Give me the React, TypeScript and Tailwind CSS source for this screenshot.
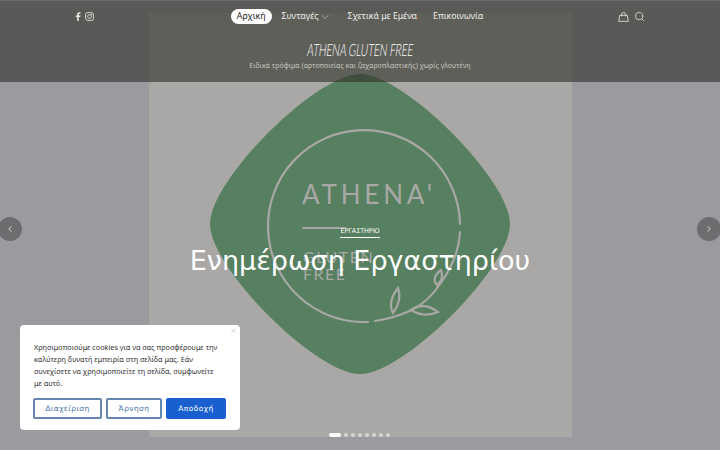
import React from "react";
import { ChevronDown, ChevronLeft, ChevronRight, Search, X } from "lucide-react";

const sans = "font-['DejaVu_Sans','Noto_Sans',sans-serif]";
const noto = "font-['Noto_Sans','DejaVu_Sans',sans-serif]";

function Logo() {
  return (
    <svg viewBox="0 0 423 424" className="h-full w-full" fill="none">
      <path d="M361 211C361 255 255 361 211 361C167 361 61 255 61 211C61 167 167 61 211 61C255 61 361 167 361 211Z" fill="#56805f" />
      <g stroke="#a9a8a6" strokeWidth="2.2" strokeLinecap="round">
        <path d="M311 211 A96 96 0 1 0 219 309" />
        <path d="M226 308 C240 306 252 302 263 297 C274 291 284 282 291 271 C302 256 310 238 311 219" />
        <path d="M249 275 C242 284 240 292 244 300 C250 292 252 283 249 275 Z" />
        <path d="M262 297 C270 291 280 292 289 299 C280 303 270 302 262 297 Z" />
        <path d="M292 257 C285 262 284 268 288 272 C293 268 294 262 292 257 Z" />
        <path d="M154 215 H196" />
      </g>
      <g fill="#a9a8a6" fontFamily="'Lato','Noto Sans',sans-serif">
        <text x="153" y="191" fontSize="26" letterSpacing="3.800">ATHENA'</text>
        <text x="154" y="250" fontSize="16" letterSpacing="1.500">GLUTEN</text>
        <text x="154" y="267" fontSize="16" letterSpacing="1.500">FREE</text>
      </g>
    </svg>
  );
}

function Facebook() {
  return (
    <svg viewBox="0 0 10 16" className="h-[9px] w-[6px]" fill="#e8e8e4">
      <path d="M6.4 16V9h2.5l.4-2.8H6.4V4.500c0-.8.3-1.400 1.400-1.400h1.600V.6C9.100.5 8.200.4 7.200.4 5 .4 3.500 1.700 3.500 4.100v2.100H1V9h2.500v7z" />
    </svg>
  );
}

function Instagram() {
  return (
    <svg viewBox="0 0 16 16" className="h-[9px] w-[9px]" fill="none" stroke="#e8e8e4" strokeWidth="1.500">
      <rect x="1" y="1" width="14" height="14" rx="4" />
      <circle cx="8" cy="8" r="3.300" />
      <circle cx="12" cy="4" r=".6" fill="#e8e8e4" />
    </svg>
  );
}

function Bag() {
  return (
    <svg viewBox="0 0 16 14" className="h-[10px] w-[11px]" fill="none" stroke="#e8e8e4" strokeWidth="1.200">
      <path d="M2.500 4.500H13.500L15 13.300H1Z" />
      <path d="M5.200 6V3.200a2.800 2.800 0 0 1 5.600 0V6" />
    </svg>
  );
}

export default function App() {
  return (
    <div className={`relative flex h-[450px] w-[720px] items-center justify-center overflow-hidden bg-[#9a9b9f] ${sans}`}>
      <div className="h-[424px] w-[423px] bg-[#a9a8a6]">
        <Logo />
      </div>

      <header className="absolute inset-x-0 top-0 h-[82px] border-t border-white/10 bg-[#2e2f28]/60">
        <div className="flex h-[31px] items-center justify-between px-[75px]">
          <div className="flex w-[100px] items-center gap-[4px]">
            <Facebook />
            <Instagram />
          </div>
          <nav className={`flex items-center gap-[10px] text-[8.750px] font-normal text-[#ecece8] ${noto}`}>
            <a className="rounded-full bg-white px-[6px] py-[1px] text-[#222]">Αρχική</a>
            <a className="flex items-center gap-[1px]">
              Συνταγές <ChevronDown size={12} strokeWidth={1} />
            </a>
            <a className="ml-[6px]">Σχετικά με Εμένα</a>
            <a className="ml-[6px]">Επικοινωνία</a>
          </nav>
          <div className="flex w-[106px] items-center justify-end gap-[5px] text-[#e8e8e4]">
            <Bag />
            <Search size={11} strokeWidth={1.6} />
          </div>
        </div>
        <div className="mt-[10px] flex flex-col items-center">
          <div className="origin-center -skew-x-12 scale-x-[.6] font-['Lato',sans-serif] text-[17px] font-light leading-4 tracking-[-0.2px] text-white">
            ATHENA GLUTEN FREE
          </div>
          <p className={`mt-[3px] text-[7px] leading-[10px] text-[#c4c5bf] ${noto}`}>
            Ειδικά τρόφιμα (αρτοποιείας και ζαχαροπλαστικής) χωρίς γλουτένη
          </p>
        </div>
      </header>

      <button className="absolute -left-[2px] top-[217px] flex size-6 items-center justify-center rounded-full bg-[#6c6d6f] text-[#e6e6e6]">
        <ChevronLeft size={10} />
      </button>
      <button className="absolute -right-[1px] top-[217px] flex size-6 items-center justify-center rounded-full bg-[#6c6d6f] text-[#e6e6e6]">
        <ChevronRight size={10} />
      </button>

      <div className="absolute inset-x-0 top-[226px] flex flex-col items-center text-white">
        <span className="border-b border-white pb-[1px] text-[6.500px] leading-[10px] tracking-[-0.1px]">ΕΡΓΑΣΤΗΡΙΟ</span>
        <h1 className="mt-[3px] text-[27px] font-normal leading-10">Ενημέρωση Εργαστηρίου</h1>
      </div>

      <div className="absolute bottom-[13px] left-[329px] flex items-center gap-[3px]">
        <span className="h-1 w-3 rounded-full bg-white" />
        {[0, 1, 2, 3, 4, 5, 6].map((i) => (
          <span key={i} className="h-1 w-1 rounded-full bg-[#d4d4d2]" />
        ))}
      </div>

      <aside className="absolute left-5 top-[325px] h-[105px] w-[220px] rounded-[4px] bg-white px-[13px] pt-4 text-[#333]">
        <X size={7} strokeWidth={1.5} className="absolute right-[3px] top-[2px] text-[#999]" />
        <p className={`pl-px pr-[8px] text-[7.250px] leading-3 ${noto}`}>
          Χρησιμοποιούμε cookies για να σας προσφέρουμε την καλύτερη δυνατή εμπειρία στη σελίδα μας. Εάν συνεχίσετε να χρησιμοποιείτε τη σελίδα, συμφωνείτε με αυτό.
        </p>
        <div className="mt-[9px] flex gap-1 text-[7.500px] tracking-[0.4px]">
          <button className="h-[21px] w-[69px] rounded-[2px] border-2 border-[#6486b0] text-[#4a72a8]">Διαχείριση</button>
          <button className="h-[21px] w-[56px] rounded-[2px] border-2 border-[#6486b0] text-[#4a72a8]">Άρνηση</button>
          <button className="h-[21px] w-[60px] rounded-[2px] bg-[#1a5fd0] text-white">Αποδοχή</button>
        </div>
      </aside>
    </div>
  );
}
